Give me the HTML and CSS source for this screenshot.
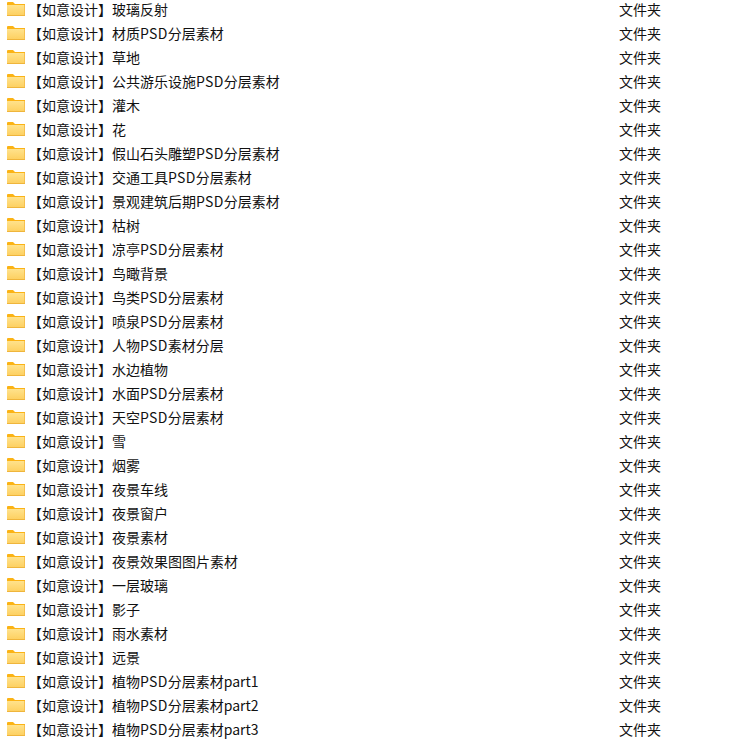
FILE: index.html
```html
<!DOCTYPE html>
<html lang="zh-CN">
<head>
<meta charset="utf-8">
<title>文件列表</title>
<link rel="stylesheet" href="styles.css">
</head>
<body>
<svg class="defs" width="0" height="0" aria-hidden="true">
  <defs>
    <linearGradient id="fg" x1="0" y1="0" x2="0" y2="1">
      <stop offset="0" stop-color="#ffe28c"/>
      <stop offset="1" stop-color="#fdcf5e"/>
    </linearGradient>
    <symbol id="folder" viewBox="0 0 18 14">
      <path d="M0 1Q0 0 1 0H6L8 2H18V5H0Z" fill="#fbb315"/>
      <rect x="0" y="3" width="18" height="11" fill="url(#fg)"/>
      <rect x="17" y="3" width="1" height="11" fill="#f6c04e"/>
      <rect x="0" y="13" width="18" height="1" fill="#efb53c"/>
    </symbol>
  </defs>
</svg>
<ul class="list">
  <li class="row"><span class="name"><svg class="icon"><use href="#folder"/></svg><span>【如意设计】玻璃反射</span></span><span class="type">文件夹</span></li>
  <li class="row"><span class="name"><svg class="icon"><use href="#folder"/></svg><span>【如意设计】材质<span class="lat">PSD</span>分层素材</span></span><span class="type">文件夹</span></li>
  <li class="row"><span class="name"><svg class="icon"><use href="#folder"/></svg><span>【如意设计】草地</span></span><span class="type">文件夹</span></li>
  <li class="row"><span class="name"><svg class="icon"><use href="#folder"/></svg><span>【如意设计】公共游乐设施<span class="lat">PSD</span>分层素材</span></span><span class="type">文件夹</span></li>
  <li class="row"><span class="name"><svg class="icon"><use href="#folder"/></svg><span>【如意设计】灌木</span></span><span class="type">文件夹</span></li>
  <li class="row"><span class="name"><svg class="icon"><use href="#folder"/></svg><span>【如意设计】花</span></span><span class="type">文件夹</span></li>
  <li class="row"><span class="name"><svg class="icon"><use href="#folder"/></svg><span>【如意设计】假山石头雕塑<span class="lat">PSD</span>分层素材</span></span><span class="type">文件夹</span></li>
  <li class="row"><span class="name"><svg class="icon"><use href="#folder"/></svg><span>【如意设计】交通工具<span class="lat">PSD</span>分层素材</span></span><span class="type">文件夹</span></li>
  <li class="row"><span class="name"><svg class="icon"><use href="#folder"/></svg><span>【如意设计】景观建筑后期<span class="lat">PSD</span>分层素材</span></span><span class="type">文件夹</span></li>
  <li class="row"><span class="name"><svg class="icon"><use href="#folder"/></svg><span>【如意设计】枯树</span></span><span class="type">文件夹</span></li>
  <li class="row"><span class="name"><svg class="icon"><use href="#folder"/></svg><span>【如意设计】凉亭<span class="lat">PSD</span>分层素材</span></span><span class="type">文件夹</span></li>
  <li class="row"><span class="name"><svg class="icon"><use href="#folder"/></svg><span>【如意设计】鸟瞰背景</span></span><span class="type">文件夹</span></li>
  <li class="row"><span class="name"><svg class="icon"><use href="#folder"/></svg><span>【如意设计】鸟类<span class="lat">PSD</span>分层素材</span></span><span class="type">文件夹</span></li>
  <li class="row"><span class="name"><svg class="icon"><use href="#folder"/></svg><span>【如意设计】喷泉<span class="lat">PSD</span>分层素材</span></span><span class="type">文件夹</span></li>
  <li class="row"><span class="name"><svg class="icon"><use href="#folder"/></svg><span>【如意设计】人物<span class="lat">PSD</span>素材分层</span></span><span class="type">文件夹</span></li>
  <li class="row"><span class="name"><svg class="icon"><use href="#folder"/></svg><span>【如意设计】水边植物</span></span><span class="type">文件夹</span></li>
  <li class="row"><span class="name"><svg class="icon"><use href="#folder"/></svg><span>【如意设计】水面<span class="lat">PSD</span>分层素材</span></span><span class="type">文件夹</span></li>
  <li class="row"><span class="name"><svg class="icon"><use href="#folder"/></svg><span>【如意设计】天空<span class="lat">PSD</span>分层素材</span></span><span class="type">文件夹</span></li>
  <li class="row"><span class="name"><svg class="icon"><use href="#folder"/></svg><span>【如意设计】雪</span></span><span class="type">文件夹</span></li>
  <li class="row"><span class="name"><svg class="icon"><use href="#folder"/></svg><span>【如意设计】烟雾</span></span><span class="type">文件夹</span></li>
  <li class="row"><span class="name"><svg class="icon"><use href="#folder"/></svg><span>【如意设计】夜景车线</span></span><span class="type">文件夹</span></li>
  <li class="row"><span class="name"><svg class="icon"><use href="#folder"/></svg><span>【如意设计】夜景窗户</span></span><span class="type">文件夹</span></li>
  <li class="row"><span class="name"><svg class="icon"><use href="#folder"/></svg><span>【如意设计】夜景素材</span></span><span class="type">文件夹</span></li>
  <li class="row"><span class="name"><svg class="icon"><use href="#folder"/></svg><span>【如意设计】夜景效果图图片素材</span></span><span class="type">文件夹</span></li>
  <li class="row"><span class="name"><svg class="icon"><use href="#folder"/></svg><span>【如意设计】一层玻璃</span></span><span class="type">文件夹</span></li>
  <li class="row"><span class="name"><svg class="icon"><use href="#folder"/></svg><span>【如意设计】影子</span></span><span class="type">文件夹</span></li>
  <li class="row"><span class="name"><svg class="icon"><use href="#folder"/></svg><span>【如意设计】雨水素材</span></span><span class="type">文件夹</span></li>
  <li class="row"><span class="name"><svg class="icon"><use href="#folder"/></svg><span>【如意设计】远景</span></span><span class="type">文件夹</span></li>
  <li class="row"><span class="name"><svg class="icon"><use href="#folder"/></svg><span>【如意设计】植物<span class="lat">PSD</span>分层素材part1</span></span><span class="type">文件夹</span></li>
  <li class="row"><span class="name"><svg class="icon"><use href="#folder"/></svg><span>【如意设计】植物<span class="lat">PSD</span>分层素材part2</span></span><span class="type">文件夹</span></li>
  <li class="row"><span class="name"><svg class="icon"><use href="#folder"/></svg><span>【如意设计】植物<span class="lat">PSD</span>分层素材part3</span></span><span class="type">文件夹</span></li>
</ul>
</body>
</html>
```
FILE: styles.css
```css
html, body {
  margin: 0;
  padding: 0;
  height: 100%;
  overflow: hidden;
  background: #fff;
}
.defs {
  display: block;
  height: 0;
}
.list {
  list-style: none;
  margin: -3px 0 0;
  padding: 0 0 0 7px;
  font-family: "Noto Sans CJK SC", "Noto Sans", sans-serif;
  font-size: 14px;
  color: #111;
}
.row {
  display: grid;
  grid-template-columns: 612px auto;
  align-items: center;
  height: 24px;
  line-height: 24px;
  white-space: nowrap;
}
.name {
  display: flex;
  align-items: center;
  gap: 3px;
}
.icon {
  width: 18px;
  height: 14px;
  flex: none;
}
.lat {
  letter-spacing: 0.33px;
}
```
